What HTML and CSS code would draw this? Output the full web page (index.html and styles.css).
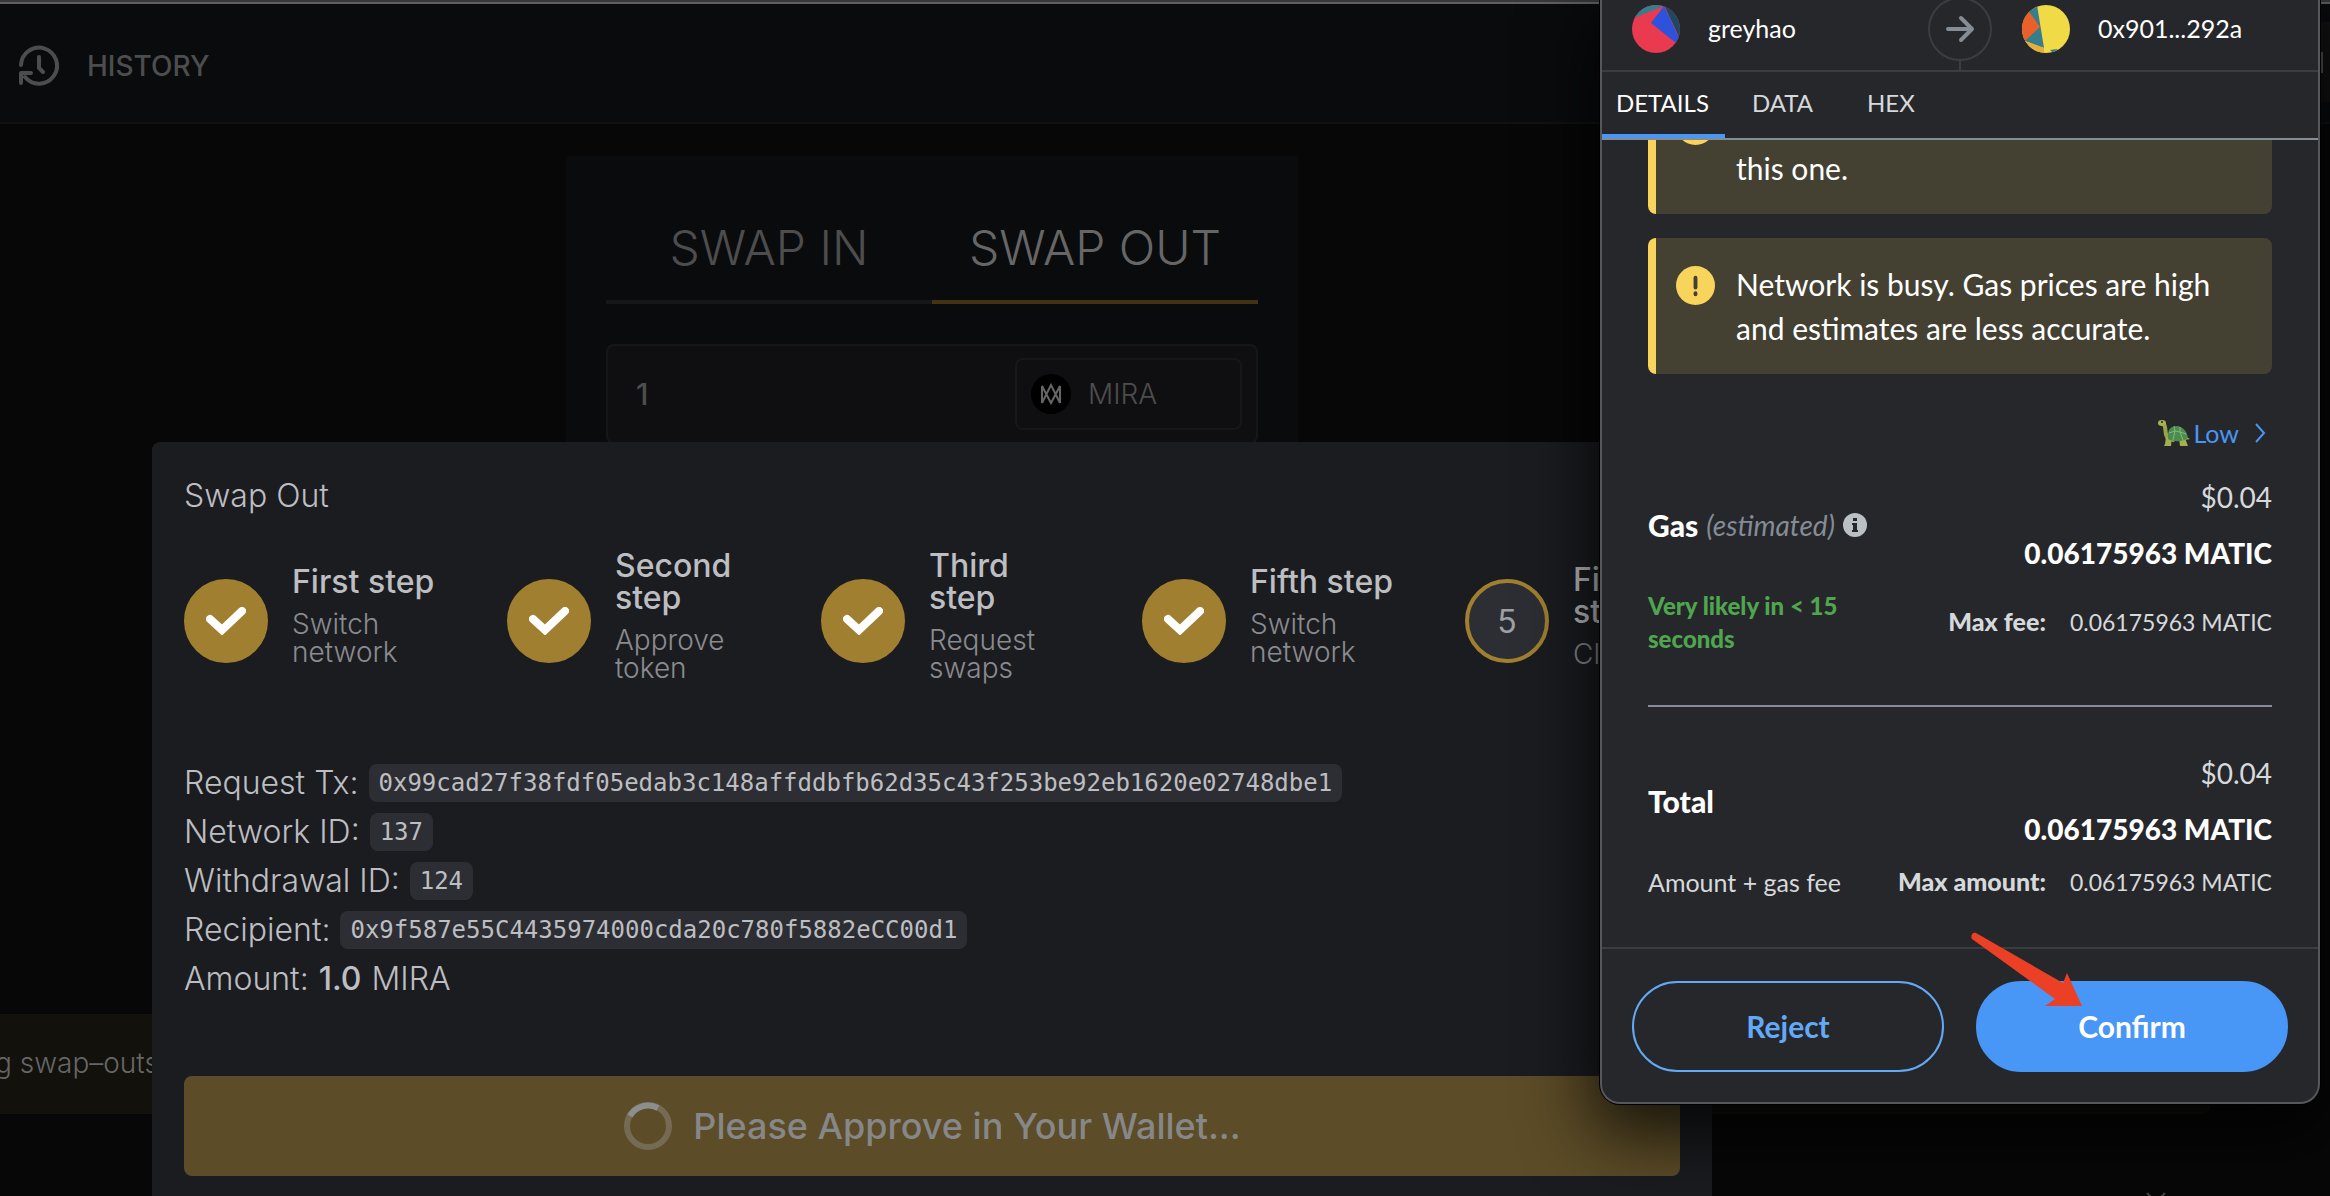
FILE: index.html
```html
<!DOCTYPE html>
<html lang="en">

<head>
    <meta charset="UTF-8">
    <meta name="viewport" content="width=device-width, initial-scale=1.0">
    <title>Swap Out</title>
    <link rel="stylesheet" href="styles.css">
</head>

<body>
    <header class="topbar">
        <a class="history" href="#history">
            <svg class="history-icon" viewBox="0 0 42 42" fill="none" stroke="currentColor" stroke-width="4" stroke-linecap="round">
                <path d="M3 20A18 18 0 1 1 7 32" />
                <path d="M3 38V28h10" stroke-linejoin="round" />
                <path d="M21 12v11l4 4" />
            </svg>
            HISTORY
        </a>
        <button class="account" type="button" aria-label="Account"><span class="account-mark"></span></button>
    </header>

    <main class="page">
        <section class="swap-card">
            <div class="swap-tabs">
                <button type="button">SWAP IN</button>
                <button type="button" class="active">SWAP OUT</button>
            </div>
            <div class="amount-box">
                <input type="text" aria-label="Amount" value="1">
                <button class="token" type="button">
                    <svg class="token-logo" viewBox="0 0 40 40">
                        <circle cx="20" cy="20" r="20" fill="#000" />
                        <path d="M11 29V12l9 17 9-17v17M11 29l9-18 9 18" fill="none" stroke="#666" stroke-width="2" />
                    </svg>
                    MIRA
                </button>
            </div>
        </section>
    </main>

    <div class="notice">g swap–outs</div>
    <div class="below">
        <svg viewBox="0 0 20 20" fill="none" stroke="#444" stroke-width="2"><path d="M1 1l9 9 9-9" /></svg>
    </div>

    <div class="overlay">
        <section class="modal">
            <h1>Swap Out</h1>
            <ol class="steps">
                <li>
                    <span class="dot done"><svg viewBox="0 0 40 28"><path d="M4 12l12 11L36 4" /></svg></span>
                    <div class="step-text"><strong>First step</strong><span>Switch<br>network</span></div>
                </li>
                <li>
                    <span class="dot done"><svg viewBox="0 0 40 28"><path d="M4 12l12 11L36 4" /></svg></span>
                    <div class="step-text"><strong>Second<br>step</strong><span>Approve<br>token</span></div>
                </li>
                <li>
                    <span class="dot done"><svg viewBox="0 0 40 28"><path d="M4 12l12 11L36 4" /></svg></span>
                    <div class="step-text"><strong>Third<br>step</strong><span>Request<br>swaps</span></div>
                </li>
                <li>
                    <span class="dot done"><svg viewBox="0 0 40 28"><path d="M4 12l12 11L36 4" /></svg></span>
                    <div class="step-text"><strong>Fifth step</strong><span>Switch<br>network</span></div>
                </li>
                <li>
                    <span class="dot">5</span>
                    <div class="step-text"><strong>Final<br>step</strong><span>Claim</span></div>
                </li>
            </ol>
            <div class="info">
                <p>Request Tx: <code>0x99cad27f38fdf05edab3c148affddbfb62d35c43f253be92eb1620e02748dbe1</code></p>
                <p>Network ID: <code>137</code></p>
                <p>Withdrawal ID: <code>124</code></p>
                <p>Recipient: <code>0x9f587e55C4435974000cda20c780f5882eCC00d1</code></p>
                <p>Amount: <b>1.0</b> MIRA</p>
            </div>
            <button class="approve" type="button" disabled>
                <svg viewBox="0 0 50 50" fill="none" stroke-width="6">
                    <circle cx="25" cy="25" r="21" stroke="#756b55" />
                    <path d="M7 15A21 21 0 0 1 35 7" stroke="#8b8d8f" />
                </svg>
                Please Approve in Your Wallet...
            </button>
        </section>
    </div>

    <aside class="wallet">
        <div class="parties">
            <div class="party">
                <svg class="avatar" viewBox="0 0 48 48">
                    <clipPath id="round"><circle cx="24" cy="24" r="24" /></clipPath>
                    <g clip-path="url(#round)">
                        <path fill="#e93a50" d="M0 0h48v48H0z" />
                        <path fill="#377d8c" d="M0 0h34l-2 1L2 13z" />
                        <path fill="#1d4a62" d="M32 0h16v34z" />
                        <path fill="#2f52dc" d="M32 1l15 32-3 5-25-20z" />
                    </g>
                </svg>
                <span>greyhao</span>
            </div>
            <div class="arrow-circle">
                <svg viewBox="0 0 30 30" fill="none" stroke="#848c96" stroke-width="4" stroke-linecap="round" stroke-linejoin="round"><path d="M3 15h23M16 4l11 11-11 11" /></svg>
            </div>
            <div class="party">
                <svg class="avatar" viewBox="0 0 48 48">
                    <g clip-path="url(#round)">
                        <path fill="#f0da46" d="M0 0h48v48H0z" />
                        <path fill="#377d8c" d="M0 0h15l7 43-19-7z" />
                        <path fill="#e9602a" d="M0 0l8 8 10 14L3 36H0z" />
                        <path fill="#e8ae3c" d="M0 36h3l19 7v5H0z" />
                        <path fill="#377d8c" d="M28 45l8-1-5 4z" />
                    </g>
                </svg>
                <span>0x901...292a</span>
            </div>
        </div>

        <nav class="wallet-tabs">
            <button type="button" class="active">DETAILS</button>
            <button type="button">DATA</button>
            <button type="button">HEX</button>
        </nav>

        <div class="details">
            <div class="alert queued">
                <svg class="alert-icon" viewBox="0 0 40 40"><circle cx="20" cy="20" r="20" /></svg>
                <p>this one.</p>
            </div>
            <div class="alert">
                <svg class="alert-icon" viewBox="0 0 40 40">
                    <circle cx="20" cy="20" r="20" />
                    <path d="M20 12v10M20 28v1" fill="none" stroke="#444133" stroke-width="4" stroke-linecap="round" />
                </svg>
                <p>Network is busy. Gas prices are high<br>and estimates are less accurate.</p>
            </div>

            <a class="speed" href="#speed">
                <svg class="turtle" viewBox="0 0 32 28">
                    <path d="M5 4c4 4 1 9 4 14l6 3" fill="none" stroke="#9aa548" stroke-width="4" stroke-linecap="round" />
                    <ellipse cx="4" cy="4" rx="4" ry="3" fill="#a9b354" />
                    <circle cx="4" cy="3" r="1" fill="#222" />
                    <path d="M8 18h6l-1 9H6l1-2zM21 19h6l3 8h-8zM27 17l5 3-5 1z" fill="#a3b04c" />
                    <path d="M10 20C9 10 13 7 19 7c7 1 10 6 11 12-5 4-15 4-20 1z" fill="#4a8c52" />
                    <path d="M11 14l6-2 5 1 6 2M16 7l1 5-2 9M22 8v5l3 8" fill="none" stroke="#86b870" />
                </svg>
                <span>Low</span>
                <svg class="chevron" viewBox="0 0 12 20" fill="none" stroke="currentColor" stroke-width="2"><path d="M2 1l8 9-8 9" /></svg>
            </a>

            <div class="fee">
                <div class="fee-label">
                    <b>Gas</b> <i>(estimated)</i>
                    <svg viewBox="0 0 24 24"><circle cx="12" cy="12" r="12" fill="#bbc0c5" /><path d="M10 5h4v3h-4zM9 10h5v7h1v2H9v-2h1v-5H9z" fill="#26272b" /></svg>
                </div>
                <div class="fee-value"><span>$0.04</span><b>0.06175963 MATIC</b></div>
            </div>
            <div class="fee-note">
                <strong class="likely">Very likely in &lt; 15<br>seconds</strong>
                <span class="max"><b>Max fee:</b> 0.06175963 MATIC</span>
            </div>

            <hr>

            <div class="fee">
                <div class="fee-label"><b>Total</b></div>
                <div class="fee-value"><span>$0.04</span><b>0.06175963 MATIC</b></div>
            </div>
            <div class="fee-note">
                <span class="note-label">Amount + gas fee</span>
                <span class="max"><b>Max amount:</b> 0.06175963 MATIC</span>
            </div>
        </div>

        <footer class="actions">
            <button class="reject" type="button">Reject</button>
            <button class="confirm" type="button">Confirm</button>
            <svg class="pointer" viewBox="0 0 112 76"><path d="M6 1L93 51l4-10 15 33H75l10-7L2 7C0 3 3 0 6 1z" fill="#eb4026" /></svg>
        </footer>
    </aside>
</body>

</html>
```

FILE: styles.css
```css
* {
    box-sizing: border-box;
}

body {
    margin: 0;
    height: 100vh;
    overflow: hidden;
    position: relative;
    background: #070707;
    color: #bdbec1;
    font-family: Inter, sans-serif;
    font-weight: 300;
}

button,
input {
    border: none;
    background: none;
    padding: 0;
    color: inherit;
    font: inherit;
}

a {
    color: inherit;
    text-decoration: none;
}

h1,
p,
ol {
    margin: 0;
    padding: 0;
}

svg {
    display: block;
    flex: none;
}

/* page behind the modal */
.topbar {
    display: flex;
    align-items: center;
    justify-content: space-between;
    height: 124px;
    border-top: 2px solid #38383b;
    border-bottom: 2px solid #111213;
    box-shadow: inset 0 2px #606063;
    background: #0a0b0d;
    color: #4d4d4d;
}

.history {
    display: flex;
    align-items: center;
    gap: 27px;
    padding: 8px 0 0 18px;
    font-size: 28px;
    font-weight: 500;
}

.history-icon {
    width: 42px;
    height: 42px;
}

.account {
    display: flex;
    align-items: center;
    justify-content: flex-end;
    width: 160px;
    height: 80px;
    padding-right: 7px;
    background: #121213;
}

.account-mark {
    width: 2px;
    height: 21px;
    background: #555;
}

.page {
    width: 80%;
    height: 890px;
    padding-top: 32px;
}

.swap-card {
    width: 732px;
    height: 520px;
    margin: 0 auto;
    padding: 40px;
    background: #0a0b0d;
}

.swap-tabs {
    display: flex;
    color: #4d4d4d;
}

.swap-tabs button {
    flex: 1;
    border-bottom: 4px solid #161719;
    font-size: 48px;
    line-height: 104px;
}

.swap-tabs .active {
    border-color: #443312;
    color: #666;
}

.amount-box {
    display: flex;
    align-items: center;
    justify-content: space-between;
    height: 100px;
    margin-top: 40px;
    padding: 0 14px 0 28px;
    border: 2px solid #161719;
    border-radius: 8px;
    background: #0f0f11;
    color: #4d4d4d;
}

.amount-box input {
    width: 300px;
    font-size: 30px;
    font-weight: 500;
}

.token {
    display: flex;
    align-items: center;
    gap: 17px;
    width: 227px;
    height: 72px;
    padding-left: 14px;
    border: 2px solid #161719;
    border-radius: 8px;
    font-size: 28px;
}

.token-logo {
    width: 40px;
    height: 40px;
}

.notice {
    height: 100px;
    margin-right: 120px;
    border-radius: 0 8px 8px 0;
    background: #12110c;
    color: #666;
    font-size: 28px;
    line-height: 99px;
    text-indent: -5px;
}

.below {
    display: flex;
    justify-content: flex-end;
    padding: 78px 164px 0 0;
}

.below svg {
    width: 20px;
    height: 20px;
}

/* swap out modal */
.overlay {
    position: absolute;
    top: 442px;
    left: 0;
    width: 80%;
    display: flex;
    justify-content: center;
}

.modal {
    width: 1560px;
    padding: 38px 32px 32px;
    border-radius: 8px;
    background: #1b1c20;
}

.modal h1 {
    font-size: 32px;
    line-height: 32px;
    font-weight: 300;
}

.steps {
    display: grid;
    grid-template-columns: 323fr 314fr 321fr 323fr 215fr;
    margin-top: 39px;
    list-style: none;
}

.steps li {
    display: flex;
    align-items: center;
    gap: 24px;
    height: 140px;
}

.dot {
    display: flex;
    align-items: center;
    justify-content: center;
    flex: none;
    width: 84px;
    height: 84px;
    border: 4px solid #a08030;
    border-radius: 50%;
    background: #2d2e33;
    color: #9fa0a3;
    font-size: 32px;
    font-weight: 400;
}

.dot.done {
    background: #a08030;
}

.dot svg {
    width: 40px;
    height: 28px;
    fill: none;
    stroke: #fff;
    stroke-width: 8;
    stroke-linecap: round;
}

.step-text {
    padding-bottom: 10px;
    white-space: nowrap;
}

.step-text strong,
.step-text span {
    display: block;
}

.step-text strong {
    font-size: 32px;
    line-height: 32px;
    font-weight: 500;
}

.step-text span {
    margin-top: 12px;
    color: #8a8b8e;
    font-size: 28px;
    line-height: 28px;
}

.info {
    margin-top: 67px;
    font-size: 32px;
    line-height: 49px;
}

.info p {
    display: flex;
    align-items: center;
    gap: 10px;
}

.info b {
    font-weight: 500;
}

.info code {
    padding: 0 10px;
    border-radius: 8px;
    background: #2d2e33;
    font-family: "DejaVu Sans Mono", monospace;
    font-size: 24px;
    line-height: 38px;
}

.approve {
    display: flex;
    align-items: center;
    justify-content: center;
    gap: 20px;
    width: 100%;
    height: 100px;
    margin-top: 73px;
    border-radius: 8px;
    background: #5c4c27;
    color: #868788;
    font-size: 36px;
    font-weight: 500;
}

.approve svg {
    width: 50px;
    height: 50px;
}

/* wallet popup */
.wallet {
    position: absolute;
    top: 0;
    right: 10px;
    width: 720px;
    border: 2px solid #56575a;
    border-top: none;
    border-radius: 0 0 20px 20px;
    background: #26272b;
    box-shadow: 0 0 0 1px #000, 0 24px 70px 8px rgba(0, 0, 0, 0.75);
    color: #fff;
    font-family: Lato, sans-serif;
    font-size: 24px;
    font-weight: 400;
}

.parties {
    display: flex;
    align-items: center;
    height: 72px;
    padding-bottom: 13px;
    border-bottom: 2px solid #3b3d41;
    font-size: 25px;
}

.party {
    display: flex;
    align-items: center;
    flex: 1;
    gap: 28px;
    padding-left: 30px;
}

.party span {
    padding-bottom: 2px;
}

.avatar {
    width: 48px;
    height: 48px;
}

.arrow-circle {
    position: relative;
    display: flex;
    align-items: center;
    justify-content: center;
    width: 64px;
    height: 64px;
    border: 2px solid #3b3d41;
    border-radius: 50%;
}

.arrow-circle::after {
    content: "";
    position: absolute;
    top: 62px;
    width: 2px;
    height: 9px;
    background: #3b3d41;
}

.arrow-circle svg {
    width: 30px;
    height: 30px;
}

.wallet-tabs {
    display: flex;
    height: 68px;
    border-bottom: 2px solid #848c96;
}

.wallet-tabs button {
    padding: 0 27px 2px;
    border-bottom: 4px solid transparent;
    color: #d6d9dc;
}

.wallet-tabs .active {
    padding: 0 16px 2px 14px;
    border-color: #4896f5;
    color: #fff;
}

/* scrolled to its end, the first alert runs under the tabs */
.details {
    display: flex;
    flex-direction: column;
    justify-content: flex-end;
    height: 807px;
    padding: 0 46px 48px;
    overflow: hidden;
}

.details > * {
    flex: none;
}

.alert {
    display: flex;
    gap: 21px;
    padding: 24px 8px 24px 20px;
    border-left: 8px solid #f8d45c;
    border-radius: 8px;
    background: #444133;
    font-size: 30px;
    line-height: 44px;
}

.alert + .alert {
    margin-top: 24px;
}

.alert.queued {
    height: 136px;
}

.queued p {
    align-self: flex-end;
}

.alert-icon {
    width: 39px;
    height: 39px;
    margin-top: 4px;
    fill: #f8d45c;
}

.speed {
    display: flex;
    align-items: center;
    align-self: flex-end;
    height: 36px;
    margin: 41px 6px 18px 0;
    color: #4896f5;
    font-size: 25px;
}

.turtle {
    width: 32px;
    height: 28px;
    margin-right: 3px;
}

.chevron {
    width: 12px;
    height: 20px;
    margin-left: 15px;
}

.fee,
.fee-note {
    display: flex;
    align-items: center;
    justify-content: space-between;
}

.fee {
    font-size: 28px;
    line-height: 56px;
}

.fee-label {
    display: flex;
    align-items: center;
    gap: 8px;
}

.fee-label i {
    color: #848c96;
    font-size: 28px;
}

.fee-label svg {
    width: 24px;
    height: 24px;
}

.fee-label b {
    font-size: 30px;
}

.wallet b,
.wallet strong {
    font-weight: 900;
}

.fee-value {
    text-align: right;
}

.fee-value span {
    display: block;
    color: #d6d9dc;
}

.fee-note {
    margin-top: 8px;
    line-height: 33px;
    color: #d6d9dc;
}

.note-label {
    font-size: 25px;
}

.likely {
    color: #4fa64f;
}

.max {
    display: flex;
    align-items: baseline;
    gap: 24px;
    font-size: 23px;
}

.max b {
    font-size: 25px;
}

.details hr {
    width: 100%;
    height: 2px;
    margin: 50px 0 38px;
    border: none;
    background: #848c96;
}

.actions {
    position: relative;
    display: flex;
    gap: 32px;
    padding: 32px 30px 30px;
    border-top: 2px solid #3b3d41;
}

.actions button {
    flex: 1;
    height: 91px;
    padding-bottom: 2px;
    border: 2px solid #4896f5;
    border-radius: 46px;
    font-size: 30px;
    font-weight: 700;
}

.actions .reject {
    border-color: #62aaf7;
    color: #62aaf7;
}

.confirm {
    background: #4896f5;
}

.pointer {
    position: absolute;
    top: -17px;
    left: 368px;
    width: 112px;
    height: 76px;
}
```
